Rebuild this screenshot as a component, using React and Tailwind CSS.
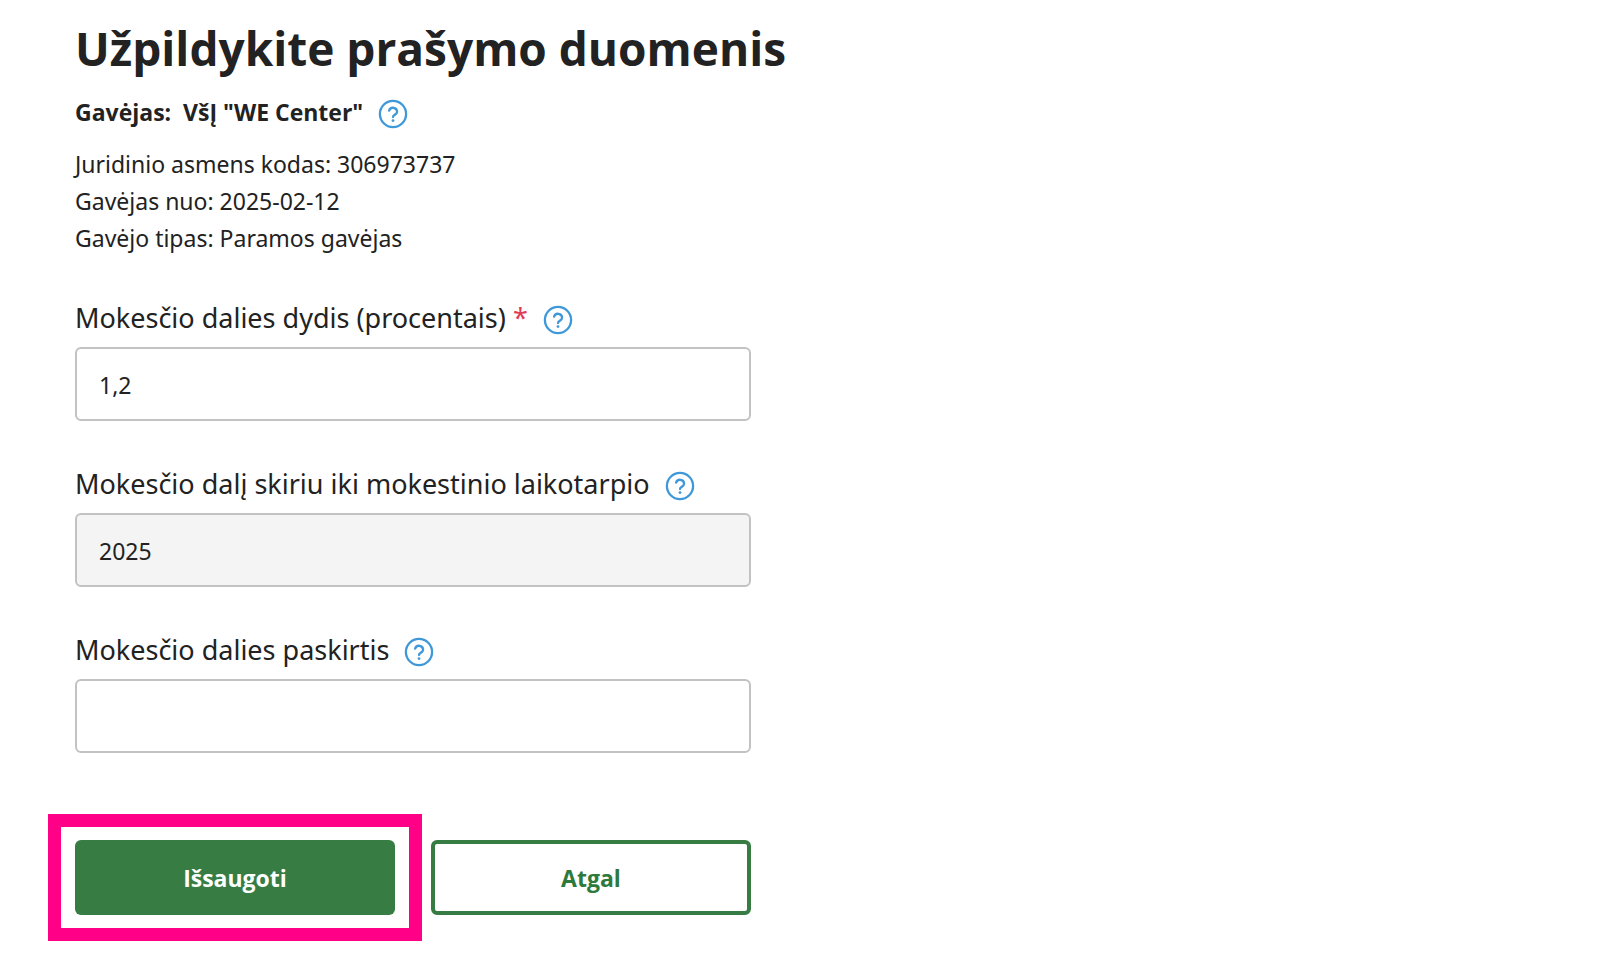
import React, { useState } from 'react';

function HelpButton({ label }) {
  return (
    <button type="button" aria-label={label} className="shrink-0 text-[#3f98d8]">
      <svg
        viewBox="0 0 32 32"
        className="block size-8"
        fill="none"
        stroke="currentColor"
        strokeWidth="2.3"
        strokeLinecap="round"
        strokeLinejoin="round"
      >
        <circle cx="16" cy="16" r="13.1" />
        <path d="M12.1 12.6a4.1 4.1 0 0 1 8 1.2c0 2.7-4.1 3.2-4.1 5.2" />
        <path d="M16 22.6h.01" strokeWidth="2.8" />
      </svg>
    </button>
  );
}

function Field({ id, label, required, value, onChange, disabled }) {
  return (
    <div>
      <div className="mb-[9px] flex h-9 items-center gap-3.5">
        <label htmlFor={id} className="pb-1 text-[27px] leading-8">
          {label}
          {required && <span className="text-[#e23b58]"> *</span>}
        </label>
        <HelpButton label={label} />
      </div>
      <input
        id={id}
        type="text"
        value={value}
        onChange={onChange}
        disabled={disabled}
        required={required}
        className="block h-[74px] w-full rounded-md border-2 border-[#c2c2c2] bg-white px-[22px] pt-0.5 text-[23px] text-[#222] disabled:bg-[#f4f4f4]"
      />
    </div>
  );
}

export default function App() {
  const [percent, setPercent] = useState('1,2');
  const [purpose, setPurpose] = useState('');

  return (
    <main className="min-h-screen bg-white px-[75px] pt-5 pb-16 font-['Noto_Sans',sans-serif] text-[#222]">
      <h1 className="font-['Open_Sans',sans-serif] text-[46px] leading-[56px] font-bold">
        Užpildykite prašymo duomenis
      </h1>

      <div className="mt-5 flex h-9 items-center gap-3.5">
        <p className="pb-1 font-['Open_Sans',sans-serif] text-[23px] leading-8 font-bold whitespace-pre">
          Gavėjas:  VšĮ "WE Center"
        </p>
        <HelpButton label="Gavėjas" />
      </div>

      <div className="mt-3.5 text-[23px] leading-[37px]">
        <p>Juridinio asmens kodas: 306973737</p>
        <p>Gavėjas nuo: 2025-02-12</p>
        <p>Gavėjo tipas: Paramos gavėjas</p>
      </div>

      <form className="mt-[45px] max-w-[676px]" onSubmit={(e) => e.preventDefault()}>
        <div className="flex flex-col gap-[47px]">
          <Field
            id="percent"
            label="Mokesčio dalies dydis (procentais)"
            required
            value={percent}
            onChange={(e) => setPercent(e.target.value)}
          />
          <Field id="period" label="Mokesčio dalį skiriu iki mokestinio laikotarpio" value="2025" disabled />
          <Field
            id="purpose"
            label="Mokesčio dalies paskirtis"
            value={purpose}
            onChange={(e) => setPurpose(e.target.value)}
          />
        </div>

        <div className="mt-[87px] grid grid-cols-2 gap-9 font-['Open_Sans',sans-serif] text-[23px] font-bold">
          <div className="relative">
            <button type="submit" className="h-[75px] w-full rounded-md bg-[#367c43] pt-0.5 text-white">
              Išsaugoti
            </button>
            <div className="pointer-events-none absolute -inset-x-[27px] -inset-y-[26px] border-[13px] border-[#ff0087]" />
          </div>
          <button type="button" className="h-[75px] rounded-md border-4 border-[#367c43] pt-0.5 text-[#2e7a3c]">
            Atgal
          </button>
        </div>
      </form>
    </main>
  );
}
